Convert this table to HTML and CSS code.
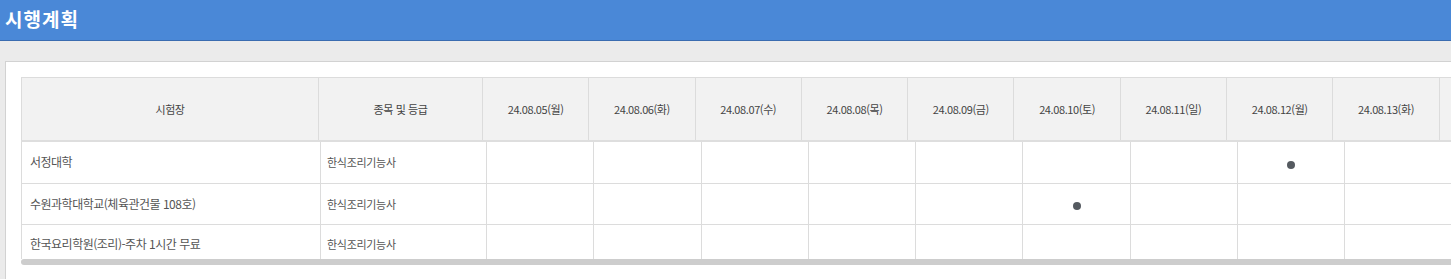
FILE: index.html
```html
<!DOCTYPE html>
<html lang="ko">
<head>
    <meta charset="UTF-8">
    <meta name="viewport" content="width=device-width, initial-scale=1.0">
    <title>시행계획</title>
    <link rel="stylesheet" href="styles.css">
</head>
<body>

    <header class="page-title">
        <h1>시행계획</h1>
    </header>

    <main class="content">
        <section class="panel">
            <div class="grid">
                <!-- fixed header table -->
                <div class="grid-head">
                    <table class="head-table">
                        <colgroup>
                            <col class="c-site">
                            <col class="c-item">
                            <col class="c-day"><col class="c-day"><col class="c-day"><col class="c-day">
                            <col class="c-day"><col class="c-day"><col class="c-day"><col class="c-day">
                            <col class="c-day"><col class="c-day">
                        </colgroup>
                        <tr>
                            <th>시험장</th>
                            <th>종목 및 등급</th>
                            <th>24.08.05(월)</th>
                            <th>24.08.06(화)</th>
                            <th>24.08.07(수)</th>
                            <th>24.08.08(목)</th>
                            <th>24.08.09(금)</th>
                            <th>24.08.10(토)</th>
                            <th>24.08.11(일)</th>
                            <th>24.08.12(월)</th>
                            <th>24.08.13(화)</th>
                            <th></th>
                        </tr>
                    </table>
                </div>

                <!-- scrolling body table -->
                <div class="grid-body">
                    <table class="body-table">
                        <colgroup>
                            <col class="c-site">
                            <col class="c-item">
                            <col class="c-day"><col class="c-day"><col class="c-day"><col class="c-day">
                            <col class="c-day"><col class="c-day"><col class="c-day"><col class="c-day">
                            <col class="c-day"><col class="c-day">
                        </colgroup>
                        <tr>
                            <td class="site">서정대학</td>
                            <td class="item">한식조리기능사</td>
                            <td></td><td></td><td></td><td></td><td></td><td></td><td></td>
                            <td><span class="dot"></span></td>
                            <td></td><td></td>
                        </tr>
                        <tr>
                            <td class="site">수원과학대학교(체육관건물 108호)</td>
                            <td class="item">한식조리기능사</td>
                            <td></td><td></td><td></td><td></td><td></td>
                            <td><span class="dot"></span></td>
                            <td></td><td></td><td></td><td></td>
                        </tr>
                        <tr class="last">
                            <td class="site">한국요리학원(조리)-주차 1시간 무료</td>
                            <td class="item">한식조리기능사</td>
                            <td></td><td></td><td></td><td></td><td></td>
                            <td></td><td></td><td></td><td></td><td></td>
                        </tr>
                    </table>
                    <div class="scroll-track"></div>
                </div>
            </div>
        </section>
    </main>

</body>
</html>
```

FILE: styles.css
```css
html, body {
    margin: 0;
    padding: 0;
}
body {
    font-family: "Noto Sans CJK KR", "Noto Sans", sans-serif;
    background-color: #ebebeb;
    color: #555;
    overflow: hidden;
}

.page-title {
    height: 40px;
    background-color: #4a88d7;
    border-bottom: 1px solid #3a6cb0;
    display: flex;
    align-items: center;
    padding-left: 5px;
}
.page-title h1 {
    margin: 0;
    font-size: 19px;
    font-weight: bold;
    color: #fff;
    letter-spacing: 1px;
    margin-top: -3px;
}

.content {
    padding: 20px 0 0 5px;
}
.panel {
    background-color: #fff;
    border: 1px solid #d2d2d2;
    border-right: none;
    padding: 15px 0 40px 15px;
}
.grid {
    overflow: hidden;
}

table {
    border-collapse: collapse;
    table-layout: fixed;
}
.head-table {
    width: 1524px;
}
.head-table .c-site { width: 297px; }
.head-table .c-item { width: 164px; }
.head-table .c-day  { width: 106.3px; }

.head-table th {
    height: 62px;
    background-color: #f2f2f2;
    border: 1px solid #dcdcdc;
    border-bottom: 2px solid #dedede;
    font-size: 11px;
    font-weight: normal;
    color: #444;
    letter-spacing: -0.4px;
    text-align: center;
    padding: 0;
}

.grid-body {
    overflow: hidden;
}
.body-table {
    width: 1538px;
}
.body-table .c-site { width: 299px; }
.body-table .c-item { width: 166px; }
.body-table .c-day  { width: 107.3px; }

.body-table td {
    height: 41px;
    box-sizing: border-box;
    border: 1px solid #dcdcdc;
    border-top: none;
    text-align: center;
    padding: 0;
    line-height: 16px;
}
/* last row is partly hidden under the scrollbar */
.body-table tr.last td {
    height: 35px;
    border-bottom: none;
    padding-top: 4px;
}
.body-table td.site {
    text-align: left;
    padding-left: 8px;
    font-size: 12px;
    letter-spacing: -0.5px;
    color: #555;
}
.body-table td.item {
    text-align: left;
    padding-left: 6px;
    font-size: 11px;
    letter-spacing: -0.3px;
    color: #555;
}

.dot {
    display: inline-block;
    width: 8px;
    height: 8px;
    border-radius: 50%;
    background-color: #555a60;
    vertical-align: middle;
}

/* horizontal scrollbar thumb under the rows */
.scroll-track {
    height: 6px;
    background-color: #cdcdcd;
    border-radius: 3px 0 0 3px;
}
```
